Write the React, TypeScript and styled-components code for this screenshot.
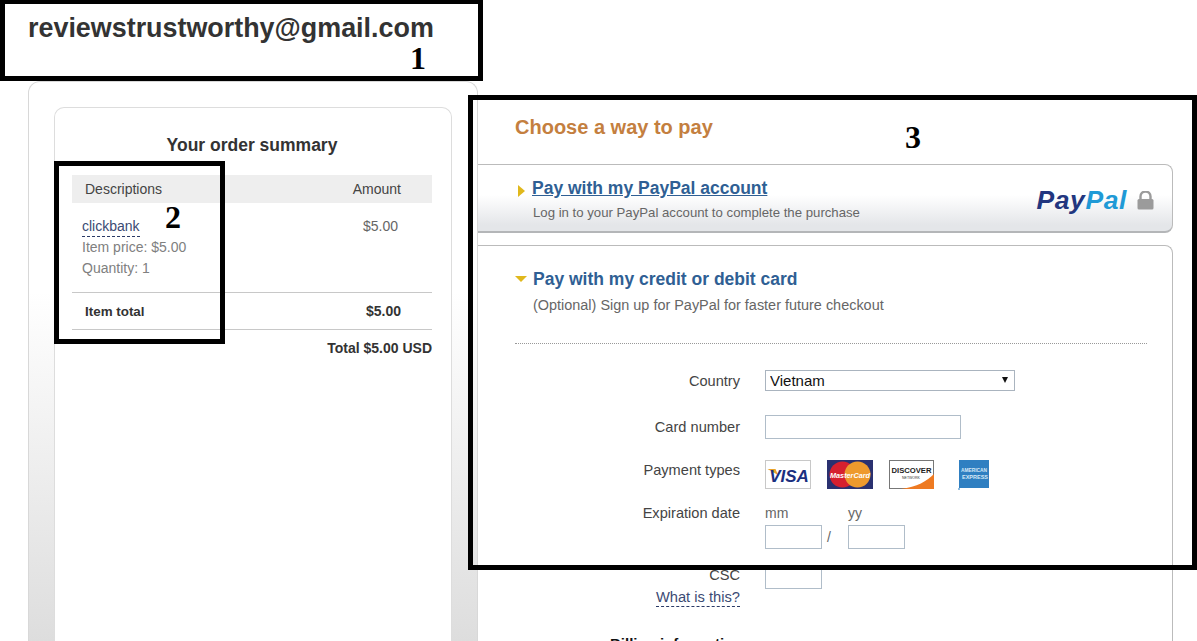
import styled, { createGlobalStyle } from 'styled-components';

const GlobalStyle = createGlobalStyle`
  html, body {
    margin: 0;
    padding: 0;
    height: 641px;
    overflow: hidden;
    background: #ffffff;
    font-family: "Liberation Sans", Arial, sans-serif;
  }
`;

const App = () => {
  return (
    <Page>
      <GlobalStyle />
      <Header>
        <Email>reviewstrustworthy@gmail.com</Email>
        <Number $left={405} $top={38}>1</Number>
      </Header>

      <Main>
        <Sidebar>
          <SummaryCard>
            <SummaryTitle>Your order summary</SummaryTitle>
            <TableHead>
              <span>Descriptions</span>
              <span>Amount</span>
            </TableHead>
            <ItemRow>
              <div>
                <DashedLink>clickbank</DashedLink>
                <ItemLine>Item price: $5.00</ItemLine>
                <ItemLine>Quantity: 1</ItemLine>
              </div>
              <ItemAmount>$5.00</ItemAmount>
            </ItemRow>
            <TotalRow>
              <TotalLabel>Item total</TotalLabel>
              <span>$5.00</span>
            </TotalRow>
            <GrandTotal>Total $5.00 USD</GrandTotal>
          </SummaryCard>
        </Sidebar>

        <Content>
          <Heading>Choose a way to pay</Heading>

          <PayPalPanel>
            <div>
              <PanelHead>
                <ArrowRight />
                <PayPalTitle>Pay with my PayPal account</PayPalTitle>
              </PanelHead>
              <PayPalSub>Log in to your PayPal account to complete the purchase</PayPalSub>
            </div>
            <Brand>
              <BrandText>
                Pay<BrandLight>Pal</BrandLight>
              </BrandText>
              <svg width="17" height="19" viewBox="0 0 17 19">
                <path d="M3.5 8V5.5a5 5 0 0 1 10 0V8" fill="none" stroke="#9b9b9b" strokeWidth="2.4" />
                <rect x="0.5" y="8" width="16" height="10.5" rx="1.5" fill="#9b9b9b" />
              </svg>
            </Brand>
          </PayPalPanel>

          <CardPanel>
            <CardHead>
              <ArrowDown />
              <CardTitle>Pay with my credit or debit card</CardTitle>
            </CardHead>
            <CardSub>(Optional) Sign up for PayPal for faster future checkout</CardSub>
            <Divider />

            <FormRow>
              <Label>Country</Label>
              <SelectWrap>
                <Select defaultValue="Vietnam">
                  <option>Vietnam</option>
                </Select>
              </SelectWrap>
            </FormRow>

            <FormRow $gap={24}>
              <Label>Card number</Label>
              <Input $width={196} />
            </FormRow>

            <FormRow $gap={21} $top>
              <Label $shift={2}>Payment types</Label>
              <Logos>
                <svg width="46" height="29" viewBox="0 0 46 29">
                  <rect x="0.5" y="0.5" width="45" height="28" fill="#fff" stroke="#c8c8c8" />
                  <path d="M2.5 9h8l2.5 6z" fill="#e9a22a" />
                  <text x="24" y="21.5" textAnchor="middle" fontFamily="Liberation Sans" fontSize="17" fontWeight="700" fontStyle="italic" fill="#1a2f80">VISA</text>
                </svg>
                <svg width="46" height="29" viewBox="0 0 46 29">
                  <rect width="46" height="29" fill="#2a3170" />
                  <circle cx="15.5" cy="14.5" r="13" fill="#d6202f" />
                  <circle cx="30.5" cy="14.5" r="13" fill="#ee9a2d" />
                  <text x="23" y="17.5" textAnchor="middle" fontFamily="Liberation Sans" fontSize="7.5" fontWeight="700" fontStyle="italic" fill="#fff" textLength="40" lengthAdjust="spacingAndGlyphs">MasterCard</text>
                </svg>
                <svg width="45" height="29" viewBox="0 0 45 29">
                  <rect x="0.5" y="0.5" width="44" height="28" fill="#fff" stroke="#777" />
                  <path d="M12 29C28 27 38 21 45 14V29z" fill="#ee7a22" />
                  <text x="22.5" y="13" textAnchor="middle" fontFamily="Liberation Sans" fontSize="7" fontWeight="700" fill="#222" textLength="40" lengthAdjust="spacingAndGlyphs">DISCOVER</text>
                  <text x="22" y="19" textAnchor="middle" fontFamily="Liberation Sans" fontSize="3.5" fill="#333">NETWORK</text>
                </svg>
                <AmexLogo width="32" height="30" viewBox="0 0 32 30">
                  <rect x="1" width="30" height="28" fill="#2f7fc1" />
                  <rect x="0" y="28" width="2" height="2" fill="#8fbde0" />
                  <text x="16" y="12" textAnchor="middle" fontFamily="Liberation Sans" fontSize="5" fontWeight="700" fill="#d5e8f6" textLength="26" lengthAdjust="spacingAndGlyphs">AMERICAN</text>
                  <text x="17" y="19" textAnchor="middle" fontFamily="Liberation Sans" fontSize="5" fontWeight="700" fill="#d5e8f6" textLength="26" lengthAdjust="spacingAndGlyphs">EXPRESS</text>
                </AmexLogo>
              </Logos>
            </FormRow>

            <FormRow $gap={16} $top>
              <Label>Expiration date</Label>
              <ExpiryGrid>
                <Hint>mm</Hint>
                <span />
                <Hint>yy</Hint>
                <Input $width={57} />
                <Slash>/</Slash>
                <Input $width={57} />
              </ExpiryGrid>
            </FormRow>

            <FormRow $gap={16} $top>
              <LabelStack>
                <Label>CSC</Label>
                <HelpLink>What is this?</HelpLink>
              </LabelStack>
              <Input $width={57} />
            </FormRow>

            <Billing>Billing information</Billing>
          </CardPanel>
        </Content>
      </Main>

      <Box2>
        <Number $left={106} $top={35}>2</Number>
      </Box2>
      <Box3>
        <Number $left={432} $top={21}>3</Number>
      </Box3>
    </Page>
  );
};

const Page = styled.div`
  position: relative;
  width: 1197px;
  height: 641px;
  overflow: hidden;
  color: #333333;
`;

const Header = styled.header`
  position: relative;
  box-sizing: border-box;
  width: 483px;
  height: 81px;
  border: 5px solid #000000;
  border-top-width: 4px;
  padding: 8px 0 0 23px;
`;

const Email = styled.div`
  font-size: 26.9px;
  font-weight: 700;
  line-height: 32px;
  color: #333333;
`;

const Number = styled.span<{ $left: number; $top: number }>`
  position: absolute;
  left: ${(p) => p.$left}px;
  top: ${(p) => p.$top}px;
  font-family: "Liberation Serif", "Times New Roman", serif;
  font-size: 32px;
  font-weight: 700;
  line-height: 32px;
  color: #000000;
`;

const Main = styled.main`
  display: flex;
  align-items: flex-start;
  padding-left: 28px;
`;

const Sidebar = styled.aside`
  box-sizing: border-box;
  width: 450px;
  height: 560px;
  padding: 25px 25px 0;
  border: 1px solid #d8d8d8;
  border-bottom: 0;
  border-radius: 12px 12px 0 0;
  background: linear-gradient(#ffffff 0, #ffffff 210px, #dddddd 560px);
`;

const SummaryCard = styled.section`
  box-sizing: border-box;
  width: 398px;
  height: 534px;
  padding: 26px 19px 0 17px;
  background: #ffffff;
  border: 1px solid #dddddd;
  border-bottom: 0;
  border-radius: 10px 10px 0 0;
`;

const SummaryTitle = styled.h2`
  margin: 0 0 19px;
  font-size: 17.5px;
  font-weight: 700;
  line-height: 22px;
  text-align: center;
  color: #333333;
`;

const TableHead = styled.div`
  display: flex;
  justify-content: space-between;
  align-items: center;
  height: 28px;
  padding: 0 31px 0 13px;
  background: #eeeeee;
  font-size: 14px;
  color: #444444;
`;

const ItemRow = styled.div`
  display: flex;
  justify-content: space-between;
  padding: 13px 34px 13px 10px;
  border-bottom: 1px solid #c8c8c8;
  font-size: 14px;
  line-height: 21px;
`;

const DashedLink = styled.a`
  display: block;
  width: fit-content;
  line-height: 18px;
  color: #3b4a73;
  border-bottom: 1px dashed #2a3a66;
  box-sizing: border-box;
  height: 21px;
  padding-top: 1px;
`;

const ItemLine = styled.div`
  color: #808080;
`;

const ItemAmount = styled.div`
  color: #666666;
`;

const TotalRow = styled.div`
  display: flex;
  justify-content: space-between;
  align-items: center;
  height: 36px;
  padding: 0 31px 0 13px;
  border-bottom: 1px solid #c8c8c8;
  font-size: 14px;
  font-weight: 700;
  color: #333333;
`;

const TotalLabel = styled.span`
  font-size: 13.4px;
`;

const GrandTotal = styled.div`
  padding-top: 9px;
  font-size: 14px;
  font-weight: 700;
  line-height: 18px;
  text-align: right;
  color: #333333;
`;

const Content = styled.div`
  width: 695px;
`;

const Heading = styled.h1`
  margin: 34px 0 25px 37px;
  font-size: 20px;
  font-weight: 700;
  line-height: 24px;
  color: #c47f3f;
`;

const PayPalPanel = styled.section`
  box-sizing: border-box;
  display: flex;
  justify-content: space-between;
  height: 69px;
  padding: 12px 18px 0 40px;
  border: 1px solid #bbbbbb;
  border-left: 0;
  border-bottom: 2px solid #b4b6b8;
  border-radius: 0 8px 8px 0;
  background: linear-gradient(#ffffff 0, #ffffff 30px, #e4e6e9 60px);
`;

const PanelHead = styled.div`
  display: flex;
  align-items: center;
  gap: 7px;
  height: 22px;
`;

const ArrowRight = styled.i`
  width: 0;
  height: 0;
  margin-top: 5px;
  border-left: 7px solid #e0b81c;
  border-top: 6px solid transparent;
  border-bottom: 6px solid transparent;
`;

const ArrowDown = styled.i`
  width: 0;
  height: 0;
  border-top: 6px solid #e0b81c;
  border-left: 6px solid transparent;
  border-right: 6px solid transparent;
`;

const PayPalTitle = styled.a`
  font-size: 17.5px;
  font-weight: 700;
  line-height: 22px;
  color: #2f5f94;
  text-decoration: underline;
`;

const PayPalSub = styled.div`
  margin: 5px 0 0 15px;
  font-size: 13.2px;
  line-height: 18px;
  color: #666666;
`;

const Brand = styled.div`
  display: flex;
  align-items: center;
  gap: 10px;
  height: 46px;
`;

const BrandText = styled.span`
  font-size: 26.5px;
  font-weight: 700;
  font-style: italic;
  letter-spacing: 0.6px;
  color: #22367f;
`;

const BrandLight = styled.span`
  color: #1f9ad6;
`;

const CardPanel = styled.section`
  box-sizing: border-box;
  height: 396px;
  margin-top: 12px;
  padding: 22px 25px 0 37px;
  border: 1px solid #bbbbbb;
  border-left: 0;
  border-bottom: 0;
  border-radius: 0 8px 0 0;
`;

const CardHead = styled.div`
  display: flex;
  align-items: center;
  gap: 6px;
  height: 22px;
`;

const CardTitle = styled.h3`
  margin: 0;
  font-size: 17.5px;
  font-weight: 700;
  line-height: 22px;
  color: #2f5f94;
`;

const CardSub = styled.div`
  margin: 6px 0 0 18px;
  font-size: 14.45px;
  line-height: 18px;
  color: #666666;
`;

const Divider = styled.hr`
  margin: 29px 0 26px;
  border: 0;
  border-top: 1px dotted #999999;
`;

const FormRow = styled.div<{ $gap?: number; $top?: boolean }>`
  display: grid;
  grid-template-columns: 225px 1fr;
  column-gap: 25px;
  align-items: ${(p) => (p.$top ? 'start' : 'center')};
  margin-top: ${(p) => p.$gap ?? 0}px;
`;

const Label = styled.label<{ $shift?: number }>`
  display: block;
  margin-top: ${(p) => p.$shift ?? 0}px;
  font-size: 14.6px;
  line-height: 16px;
  text-align: right;
  color: #444444;
`;

const SelectWrap = styled.div`
  position: relative;
  width: 250px;
  height: 21px;

  &::after {
    content: '';
    position: absolute;
    right: 7px;
    top: 7px;
    border-top: 6px solid #111111;
    border-left: 3px solid transparent;
    border-right: 3px solid transparent;
  }
`;

const Select = styled.select`
  appearance: none;
  box-sizing: border-box;
  width: 100%;
  height: 100%;
  padding: 0 0 0 4px;
  border: 1px solid #aab4bf;
  border-radius: 0;
  background: #ffffff;
  font-family: "Liberation Sans", Arial, sans-serif;
  font-size: 15px;
  color: #111111;
`;

const Input = styled.input<{ $width: number }>`
  display: block;
  box-sizing: border-box;
  width: ${(p) => p.$width}px;
  height: 24px;
  padding: 0;
  border: 1px solid #b0bdc9;
  background: #ffffff;
`;

const Logos = styled.div`
  display: flex;
  align-items: flex-start;
  gap: 16px;
  height: 29px;
`;

const AmexLogo = styled.svg`
  margin-left: 8px;
`;

const ExpiryGrid = styled.div`
  display: grid;
  grid-template-columns: 57px 26px 57px;
  row-gap: 4px;
  align-items: center;
`;

const Hint = styled.span`
  font-size: 14px;
  line-height: 16px;
  color: #666666;
`;

const Slash = styled.span`
  padding-left: 5px;
  font-size: 14px;
  color: #666666;
`;

const LabelStack = styled.div`
  display: flex;
  flex-direction: column;
  align-items: flex-end;
  gap: 5px;
  padding-top: 2px;
`;

const HelpLink = styled.a`
  font-size: 14.7px;
  line-height: 18px;
  color: #3b4a73;
  border-bottom: 1px dashed #2a3a66;
`;

const Billing = styled.div`
  margin: 28px 0 0 95px;
  font-size: 15px;
  font-weight: 700;
  line-height: 18px;
  color: #111111;
`;

const Box2 = styled.div`
  position: absolute;
  left: 54px;
  top: 161px;
  box-sizing: border-box;
  width: 171px;
  height: 183px;
  border: 5px solid #000000;
`;

const Box3 = styled.div`
  position: absolute;
  left: 468px;
  top: 95px;
  box-sizing: border-box;
  width: 729px;
  height: 475px;
  border: 5px solid #000000;
`;

export default App;
